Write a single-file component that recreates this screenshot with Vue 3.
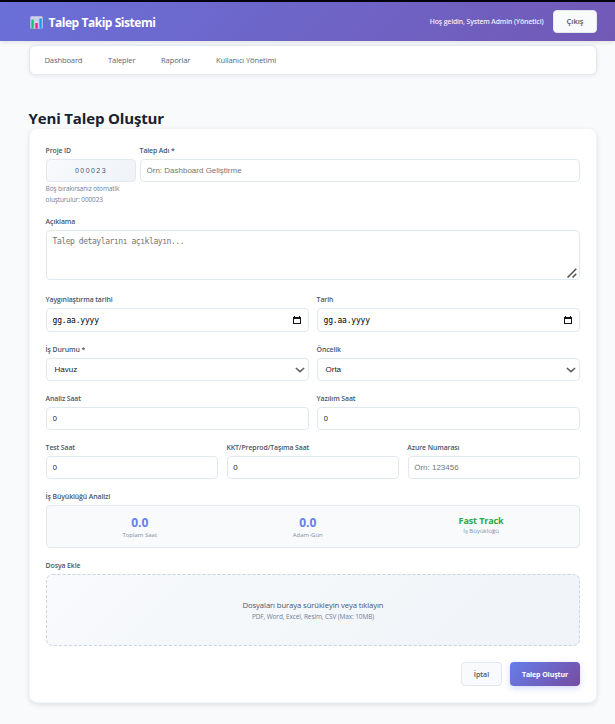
<script setup>
import { ref } from 'vue'

const menu = ['Dashboard', 'Talepler', 'Raporlar', 'Kullanıcı Yönetimi']
const projectId = ref('000023')
const title = ref('')
const description = ref('')
const analysis = ref('0')
const software = ref('0')
const test = ref('0')
const deploy = ref('0')
const azure = ref('')
const dates = ['Yaygınlaştırma tarihi', 'Tarih']
const selects = [
  { label: 'İş Durumu *', value: 'Havuz' },
  { label: 'Öncelik', value: 'Orta' },
]
const stats = [
  { value: '0.0', label: 'Toplam Saat' },
  { value: '0.0', label: 'Adam-Gün' },
  { value: 'Fast Track', label: 'İş Büyüklüğü', track: true },
]
</script>

<template>
  <div class="page">
    <header class="header">
      <div class="brand">
        <svg class="logo" viewBox="0 0 13 13" width="13" height="13">
          <rect x="0.3" y="0.3" width="12.4" height="12.4" rx="1.4" fill="#d5d3ea" />
          <path d="M4.3 .5v12M8.4 .5v12M.5 4.3h12M.5 8.4h12" stroke="#b9b6dc" stroke-width=".4" />
          <rect x="1.4" y="3.6" width="2.2" height="9" fill="#10c070" />
          <rect x="5.4" y="7" width="2.3" height="5.6" fill="#f2188c" />
          <rect x="9.4" y="2.4" width="2.3" height="10.2" fill="#149be8" />
        </svg>
        <span class="brand-name">Talep Takip Sistemi</span>
      </div>
      <div class="user">
        <span class="welcome">Hoş geldin, System Admin (Yönetici)</span>
        <button class="logout">Çıkış</button>
      </div>
    </header>

    <nav class="nav">
      <a v-for="item in menu" :key="item" class="nav-item">{{ item }}</a>
    </nav>

    <h1 class="title">Yeni Talep Oluştur</h1>

    <main class="card">
      <div class="row row-id">
        <div class="field">
          <label class="label">Proje ID</label>
          <input v-model="projectId" class="control project" />
          <p class="help">Boş bırakırsanız otomatik<br />oluşturulur: 000023</p>
        </div>
        <div class="field">
          <label class="label">Talep Adı *</label>
          <input v-model="title" class="control" placeholder="Örn: Dashboard Geliştirme" />
        </div>
      </div>

      <div class="row row-text">
        <div class="field">
          <label class="label">Açıklama</label>
          <div class="area-wrap">
            <textarea v-model="description" class="control area" placeholder="Talep detaylarını açıklayın..."></textarea>
            <svg class="grip" viewBox="0 0 10 10" width="10" height="10">
              <path d="M.5 9.5 9.3.7M5.5 9.5 9.3 5.7" fill="none" stroke="#505050" stroke-width="1.5" />
            </svg>
          </div>
        </div>
      </div>

      <div class="row two">
        <div v-for="d in dates" :key="d" class="field">
          <label class="label">{{ d }}</label>
          <div class="control date">
            <span class="date-text">gg.aa.yyyy</span>
            <svg viewBox="0 0 8 8" width="8" height="8">
              <path d="M1 0h1v1h4V0h1v1h1v7H0V1h1z M1 3v4h6V3z" fill="#151515" fill-rule="evenodd" />
            </svg>
          </div>
        </div>
      </div>

      <div class="row two">
        <div v-for="s in selects" :key="s.label" class="field">
          <label class="label">{{ s.label }}</label>
          <div class="control select">
            <span>{{ s.value }}</span>
            <svg viewBox="0 0 10 6" width="10" height="6">
              <path d="M.9 1 5 4.7 9.1 1" fill="none" stroke="#606060" stroke-width="1.6" />
            </svg>
          </div>
        </div>
      </div>

      <div class="row two">
        <div class="field">
          <label class="label">Analiz Saat</label>
          <input v-model="analysis" class="control" />
        </div>
        <div class="field">
          <label class="label">Yazılım Saat</label>
          <input v-model="software" class="control" />
        </div>
      </div>

      <div class="row three">
        <div class="field">
          <label class="label">Test Saat</label>
          <input v-model="test" class="control" />
        </div>
        <div class="field">
          <label class="label">KKT/Preprod/Taşıma Saat</label>
          <input v-model="deploy" class="control" />
        </div>
        <div class="field">
          <label class="label">Azure Numarası</label>
          <input v-model="azure" class="control" placeholder="Örn: 123456" />
        </div>
      </div>

      <div class="row">
        <div class="field">
          <label class="label">İş Büyüklüğü Analizi</label>
          <div class="stats">
            <div v-for="s in stats" :key="s.label" class="stat" :class="{ track: s.track }">
              <div class="stat-value">{{ s.value }}</div>
              <div class="stat-label">{{ s.label }}</div>
            </div>
          </div>
        </div>
      </div>

      <div class="row">
        <div class="field">
          <label class="label">Dosya Ekle</label>
          <div class="drop">
            <svg class="dash" width="100%" height="100%">
              <rect class="dash-line" rx="6" />
            </svg>
            <div class="drop-main">Dosyaları buraya sürükleyin veya tıklayın</div>
            <div class="drop-sub">PDF, Word, Excel, Resim, CSV (Max: 10MB)</div>
          </div>
        </div>
      </div>

      <div class="actions">
        <button class="btn cancel">İptal</button>
        <button class="btn submit">Talep Oluştur</button>
      </div>
    </main>
  </div>
</template>

<style>
body {
  background: #f8fafc;
}
</style>

<style scoped>
.page {
  box-sizing: border-box;
  height: 724px;
  overflow: hidden;
  border-top: 2px solid #05030f;
  background: #f8fafc;
  font-family: "Open Sans", "Noto Sans", sans-serif;
  color: #2d3748;
}
.page *,
.page *::before {
  box-sizing: border-box;
}
.header {
  display: flex;
  align-items: center;
  justify-content: space-between;
  height: 39px;
  padding: 0 18px 0 30px;
  background: linear-gradient(135deg, #6a70d8 0%, #7259b6 100%);
  box-shadow: 0 1px 5px rgba(0, 0, 0, 0.12);
}
.brand,
.user {
  display: flex;
  align-items: center;
}
.logo {
  margin-top: 2px;
}
.brand-name {
  margin: 2px 0 0 5.5px;
  font-size: 12px;
  font-weight: 700;
  letter-spacing: -0.46px;
  line-height: 16px;
  color: #fff;
}
.welcome {
  margin-right: 9.5px;
  font-size: 6.8px;
  font-weight: 600;
  letter-spacing: -0.1px;
  color: #f0edfb;
}
.logout {
  width: 44px;
  height: 23px;
  padding: 0 0 2px;
  border: 1px solid #e2e8f0;
  border-radius: 4px;
  background: #f8fafc;
  font: 600 7.5px "Open Sans", sans-serif;
  color: #4a5568;
}
.nav {
  display: flex;
  align-items: center;
  gap: 25.7px;
  height: 30px;
  margin: 4px 18px 0 29px;
  padding: 0 14.5px;
  border: 1px solid #e2e8f0;
  border-radius: 6px;
  background: #fff;
  box-shadow: 0 1px 4px rgba(0, 0, 0, 0.08);
}
.nav-item {
  font-size: 7.6px;
  letter-spacing: -0.15px;
  color: #5b6677;
}
.title {
  height: 22px;
  margin: 32px 0 0 28.5px;
  font-size: 15px;
  font-weight: 700;
  letter-spacing: -0.15px;
  line-height: 22px;
  color: #1a202c;
}
.card {
  height: 575px;
  margin: -1px 18px 0 29px;
  padding: 15px 16px 0;
  border: 1px solid #f1f4f8;
  border-radius: 8px;
  background: #fff;
  box-shadow: 0 2px 5px rgba(0, 0, 0, 0.1);
}
.row {
  display: grid;
  grid-template-columns: minmax(0, 1fr);
  margin-bottom: 11px;
}
.row-id {
  grid-template-columns: 90px minmax(0, 1fr);
  gap: 4px;
  margin-bottom: 10px;
}
.row-text {
  margin-bottom: 13px;
}
.two {
  grid-template-columns: repeat(2, minmax(0, 1fr));
  gap: 8px;
}
.three {
  grid-template-columns: repeat(3, minmax(0, 1fr));
  gap: 8.5px;
}
.label {
  display: block;
  height: 15px;
  margin-left: -0.4px;
  font-size: 6.9px;
  font-weight: 600;
  letter-spacing: -0.1px;
  line-height: 13px;
  white-space: nowrap;
  color: #4a5568;
}
.control {
  display: block;
  width: 100%;
  height: 23px;
  margin: 0;
  padding: 0 5.5px;
  border: 1px solid #e2e8f0;
  border-radius: 4px;
  background: #fff;
  font: 8px "Liberation Sans", Arial, sans-serif;
  color: #1a1a1a;
  outline: none;
}
.control::placeholder {
  color: #757575;
  opacity: 1;
}
.project {
  background: linear-gradient(135deg, #f8fafc, #eff3f8);
  font: 7px "Liberation Sans", Arial, sans-serif;
  letter-spacing: 1.45px;
  text-align: center;
  color: #4a5568;
}
.help {
  margin: 1px 0 0 -0.4px;
  font-size: 6.5px;
  letter-spacing: -0.12px;
  line-height: 11px;
  white-space: nowrap;
  color: #718096;
}
.area-wrap {
  position: relative;
}
.area {
  height: 50px;
  padding: 6px 5.5px;
  font: 8px/10px "DejaVu Sans Mono", "Liberation Mono", monospace;
  letter-spacing: -0.43px;
  resize: none;
}
.grip {
  position: absolute;
  right: 3px;
  bottom: 2px;
}
.date {
  display: flex;
  align-items: center;
  justify-content: space-between;
  height: 24px;
  padding-right: 7px;
}
.date-text {
  font: 8px "DejaVu Sans Mono", "Liberation Mono", monospace;
  letter-spacing: -0.18px;
  color: #000;
}
.select {
  display: flex;
  align-items: center;
  justify-content: space-between;
  padding: 0 3.5px 0 7.5px;
}
.stats {
  display: flex;
  justify-content: space-around;
  height: 43px;
  padding: 8px 7.5px 0;
  border: 1px solid #e2e8f0;
  border-radius: 4px;
  background: #f8fafc;
}
.stat {
  text-align: center;
  white-space: nowrap;
}
.stat-value {
  font-size: 12px;
  font-weight: 700;
  line-height: 17px;
  color: #667eea;
}
.stat-label {
  font-size: 6px;
  line-height: 8px;
  color: #8290a3;
}
.track .stat-value {
  font-size: 9px;
  letter-spacing: -0.1px;
  line-height: 13px;
  color: #28a745;
}
.drop {
  position: relative;
  height: 72px;
  padding-top: 25px;
  border-radius: 6px;
  background: linear-gradient(135deg, #f8fafc, #f3f7fa 50%, #f0f3f8);
  text-align: center;
}
.dash {
  position: absolute;
  left: 0;
  top: 0;
}
.dash-line {
  x: 0.5px;
  y: 0.5px;
  width: calc(100% - 1px);
  height: calc(100% - 1px);
  fill: none;
  stroke: #cbd5e0;
  stroke-dasharray: 3 2;
}
.drop-main {
  font-size: 7.7px;
  letter-spacing: -0.1px;
  line-height: 12px;
  color: #4a5568;
}
.drop-sub {
  font-size: 6.5px;
  letter-spacing: -0.11px;
  line-height: 11px;
  color: #718096;
}
.actions {
  display: flex;
  justify-content: flex-end;
  gap: 8px;
  padding-top: 5px;
}
.btn {
  height: 24px;
  padding: 0;
  border-radius: 4px;
  font: 600 7px "Open Sans", sans-serif;
}
.cancel {
  width: 41px;
  border: 1px solid #e2e8f0;
  background: #f8fafc;
  color: #4a5568;
}
.submit {
  width: 70px;
  border: 0;
  background: linear-gradient(135deg, #667eea, #764ba2);
  box-shadow: 0 2px 6px rgba(102, 126, 234, 0.3);
  font-weight: 700;
  letter-spacing: -0.1px;
  color: #fff;
}
</style>
